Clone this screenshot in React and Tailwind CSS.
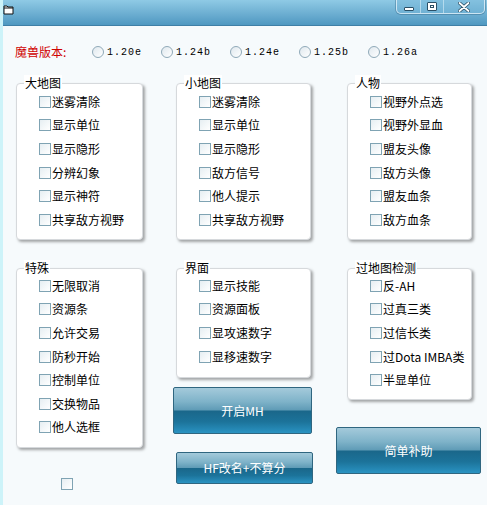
import { useState } from 'react'

const CJK = "font-['Noto_Sans_CJK_SC','Noto_Sans',sans-serif]"

const BIG_MAP = ['迷雾清除', '显示单位', '显示隐形', '分辨幻象', '显示神符', '共享敌方视野']
const SMALL_MAP = ['迷雾清除', '显示单位', '显示隐形', '敌方信号', '他人提示', '共享敌方视野']
const HEROES = ['视野外点选', '视野外显血', '盟友头像', '敌方头像', '盟友血条', '敌方血条']
const SPECIAL = ['无限取消', '资源条', '允许交易', '防秒开始', '控制单位', '交换物品', '他人选框']
const UI = ['显示技能', '资源面板', '显攻速数字', '显移速数字']
const BYPASS = ['反-AH', '过真三类', '过信长类', '过Dota IMBA类', '半显单位']
const VERSIONS = ['1.20e', '1.24b', '1.24e', '1.25b', '1.26a']

function Box({ checked, onClick }) {
    return (
        <span onClick={onClick}
            className="inline-flex w-[12px] h-[12px] shrink-0 items-center justify-center border border-[#7fa3b3] bg-gradient-to-br from-[#e6eef2] to-white">
            {checked && <span className="w-[6px] h-[6px] bg-[#2a7aa0]" />}
        </span>
    )
}

function Group({ title, items, className, pad = 'pt-[6px]' }) {
    const [on, setOn] = useState({})
    return (
        <div className={`relative bg-white border border-[#d6d9dc] rounded-[4px] shadow-[2px_2px_3px_rgba(0,0,0,0.35)] ${className}`}>
            <span className={`absolute -top-[9px] left-[7px] bg-white px-px text-[12px] leading-[16px] text-black ${CJK}`}>{title}</span>
            <div className={`flex flex-col pl-[22px] ${pad}`}>
                {items.map((t, i) => (
                    <div key={i} className="flex items-center gap-[1px] h-[23.6px]">
                        <Box checked={on[i]} onClick={() => setOn({ ...on, [i]: !on[i] })} />
                        <span className={`text-[12px] leading-none text-black ${CJK}`}>{t}</span>
                    </div>
                ))}
            </div>
        </div>
    )
}

function AeroButton({ label, className }) {
    return (
        <button className={`flex items-center justify-center rounded-[2px] border border-[#2f6680] bg-[linear-gradient(to_bottom,#a4cadb_0%,#7fb3c9_30%,#5f9bb6_49%,#1a678a_51%,#1c739a_75%,#2a93c2_100%)] text-white text-[12px] ${CJK} ${className}`}>
            {label}
        </button>
    )
}

export default function App() {
    const [ver, setVer] = useState(null)
    const [extra, setExtra] = useState(false)

    return (
        <div className="w-[487px] h-[505px] flex flex-col bg-[#f6fafc] border-l-[3px] border-[#cdf3f9] overflow-hidden">
            {/* Title bar */}
            <div className="relative h-[26px] shrink-0 -ml-[3px] bg-gradient-to-b from-[#8fcae5] to-[#4f98c1] border-b border-[#3f7fa6]">
                <svg className="absolute left-[3px] top-[5px]" width="11" height="10" viewBox="0 0 11 10">
                    <path d="M1 1h3l1 1h5v7H1z" fill="#fff" stroke="#111" strokeWidth="1" />
                    <path d="M1 3h9" stroke="#111" strokeWidth="1" />
                </svg>
                <div className="absolute right-[2px] top-0 flex h-[14px] border border-t-0 border-[#e4f3fa]/80 rounded-b-[5px] bg-[#74b4d6]/40 shadow-[0_0_0_1px_rgba(40,90,120,0.35)]">
                    <div className="w-[24px] flex items-end justify-center pb-[2px] border-r border-[#d8eef8]/60">
                        <span className="w-[10px] h-[4px] bg-white border border-[#2a4f66] rounded-[1px]" />
                    </div>
                    <div className="w-[23px] flex items-center justify-center border-r border-[#d8eef8]/60">
                        <span className="w-[10px] h-[9px] bg-white border border-[#2a4f66] rounded-[1px] flex items-center justify-center">
                            <span className="w-[4px] h-[3px] border border-[#2a4f66]" />
                        </span>
                    </div>
                    <div className="w-[40px] flex items-center justify-center">
                        <svg width="12" height="10" viewBox="0 0 12 10">
                            <path d="M1.5 1l9 8M10.5 1l-9 8" stroke="#2a4f66" strokeWidth="3.4" strokeLinecap="round" />
                            <path d="M1.5 1l9 8M10.5 1l-9 8" stroke="#fff" strokeWidth="1.8" strokeLinecap="round" />
                        </svg>
                    </div>
                </div>
            </div>

            {/* Version row */}
            <div className="flex items-center h-[20px] mt-[16px] pl-[12px]">
                <span className={`text-[12px] text-[#d00000] w-[77px] ${CJK}`}>魔兽版本:</span>
                {VERSIONS.map((v) => (
                    <label key={v} onClick={() => setVer(v)} className="flex items-center w-[69px] cursor-default">
                        <span className="w-[12px] h-[12px] rounded-full border border-[#8fa9b8] bg-gradient-to-br from-[#dfe8ee] to-white flex items-center justify-center">
                            {ver === v && <span className="w-[5px] h-[5px] rounded-full bg-[#2a7aa0]" />}
                        </span>
                        <span className="ml-[3px] text-[10px] tracking-[1px] text-black font-['Liberation_Mono',monospace]">{v}</span>
                    </label>
                ))}
            </div>

            {/* Row 1 */}
            <div className="flex mt-[21px] pl-[13px]">
                <Group title="大地图" items={BIG_MAP} className="w-[127px] h-[157px]" />
                <Group title="小地图" items={SMALL_MAP} className="w-[135px] h-[157px] ml-[33px]" />
                <Group title="人物" items={HEROES} className="w-[125px] h-[157px] ml-[36px]" />
            </div>

            {/* Row 2 */}
            <div className="flex mt-[28px] pl-[13px]">
                <div className="flex flex-col w-[127px]">
                    <Group title="特殊" items={SPECIAL} className="h-[180px]" pad="pt-[5px]" />
                    <div className="mt-[24px] ml-[45px]">
                        <Box checked={extra} onClick={() => setExtra(!extra)} />
                    </div>
                </div>
                <div className="flex flex-col w-[140px] ml-[30px]">
                    <Group title="界面" items={UI} className="w-[135px] h-[110px] ml-[3px]" pad="pt-[5px]" />
                    <AeroButton label="开启MH" className="w-[139px] h-[47px] mt-[9px]" />
                    <AeroButton label="HF改名+不算分" className="w-[137px] h-[32px] mt-[18px] ml-[3px]" />
                </div>
                <div className="flex flex-col w-[146px] ml-[23px]">
                    <Group title="过地图检测" items={BYPASS} className="w-[125px] h-[132px] ml-[11px]" pad="pt-[5px]" />
                    <AeroButton label="简单补助" className="w-[145px] h-[47px] mt-[27px]" />
                </div>
            </div>
        </div>
    )
}
